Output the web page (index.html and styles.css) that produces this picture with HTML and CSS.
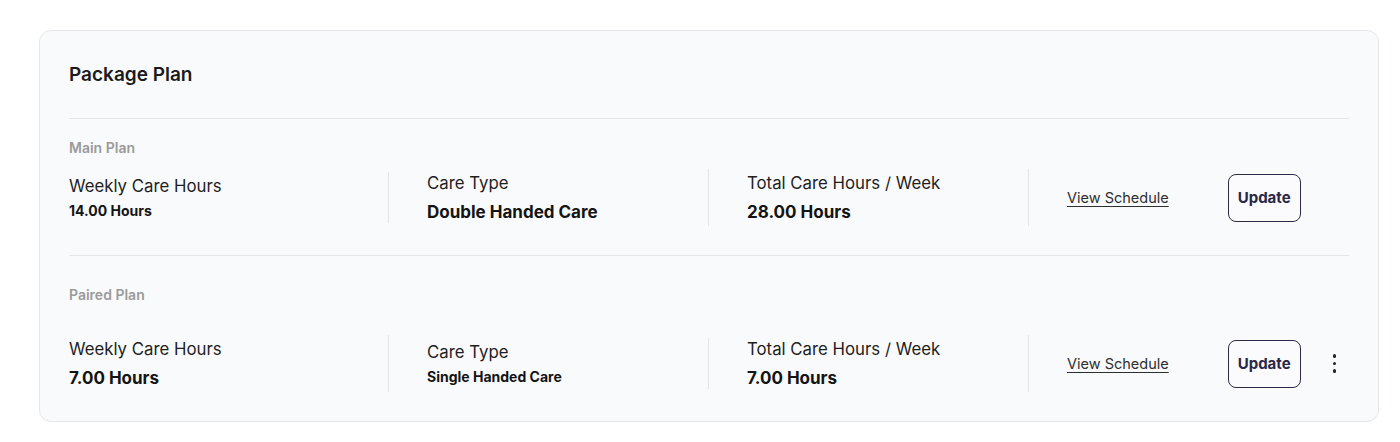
FILE: index.html
```html
<!DOCTYPE html>
<html>
<head>
<meta charset="utf-8">
<link rel="stylesheet" href="styles.css">
</head>
<body>
<div class="page">
  <div class="card">
    <div class="card-header">Package Plan</div>

    <div class="plan plan--main">
      <div class="plan-label">Main Plan</div>
      <div class="plan-row">
        <div class="col">
          <div class="col-label">Weekly Care Hours</div>
          <div class="col-value col-value--small">14.00 Hours</div>
        </div>
        <div class="col">
          <div class="col-label">Care Type</div>
          <div class="col-value">Double Handed Care</div>
        </div>
        <div class="col">
          <div class="col-label">Total Care Hours / Week</div>
          <div class="col-value">28.00 Hours</div>
        </div>
        <div class="col col--actions">
          <a class="link" href="#">View Schedule</a>
          <button class="btn">Update</button>
        </div>
      </div>
    </div>

    <div class="plan plan--paired">
      <div class="plan-label">Paired Plan</div>
      <div class="plan-row">
        <div class="col">
          <div class="col-label">Weekly Care Hours</div>
          <div class="col-value">7.00 Hours</div>
        </div>
        <div class="col">
          <div class="col-label">Care Type</div>
          <div class="col-value col-value--small">Single Handed Care</div>
        </div>
        <div class="col">
          <div class="col-label">Total Care Hours / Week</div>
          <div class="col-value">7.00 Hours</div>
        </div>
        <div class="col col--actions">
          <a class="link" href="#">View Schedule</a>
          <button class="btn">Update</button>
          <span class="kebab"><i></i><i></i><i></i></span>
        </div>
      </div>
    </div>
  </div>
</div>
</body>
</html>
```

FILE: styles.css
```css
* { box-sizing: border-box; }
html, body { margin: 0; padding: 0; background: #ffffff; }
body {
  font-family: Inter, "Noto Sans", sans-serif;
  color: #161616;
}
.page { padding: 30px 22px 0 39px; }
.card {
  width: 1340px;
  height: 392px;
  border: 1px solid #e4e6ea;
  border-radius: 12px;
  background: #f9fafc;
  padding: 0 29px;
}
.card-header {
  font-size: 19px;
  line-height: 24px;
  font-weight: 600;
  padding: 32px 0 31px;
  border-bottom: 1px solid #e4e6ea;
  color: #1b1b1b;
}
.plan { border-bottom: 1px solid #e4e6ea; }
.plan:last-child { border-bottom: none; }
.plan--main { padding: 20px 0 29px; }
.plan--paired { padding: 30px 0 29px; }
.plan-label {
  font-size: 14px;
  line-height: 18px;
  font-weight: 600;
  color: #9a9a9a;
}
.plan--main .plan-label { margin-bottom: 12px; }
.plan--paired .plan-label { margin-bottom: 31px; }
.plan-row {
  display: grid;
  grid-template-columns: 320px 320px 320px 1fr;
  align-items: center;
}
.col {
  padding: 3px 0 3px 38px;
  border-right: 1px solid #e2e4e8;
  display: flex;
  flex-direction: column;
  gap: 7px;
}
.col:first-child { padding-left: 0; }
.col-label {
  font-size: 16.8px;
  line-height: 22px;
  font-weight: 400;
  color: #1e1e1e;
}
.col-value {
  font-size: 17px;
  line-height: 22px;
  font-weight: 700;
  color: #141414;
}
.col-value--small { font-size: 14px; line-height: 18px; margin-top: -2px; }
.col--actions {
  border-right: none;
  flex-direction: row;
  align-items: center;
  gap: 0;
}
.link {
  font-size: 14.5px;
  color: #2e2e2e;
  text-decoration: underline;
  text-underline-offset: 3px;
  margin-right: 59px;
}
.btn {
  width: 73px;
  height: 48px;
  border: 1.5px solid #2c2a48;
  border-radius: 8px;
  background: #fbfbfd;
  font-family: inherit;
  font-size: 15px;
  font-weight: 700;
  color: #2a2846;
  padding: 0;
}
.kebab {
  margin-left: 30px;
  display: flex;
  flex-direction: column;
  gap: 4px;
  padding: 0 2px;
}
.kebab i {
  display: block;
  width: 3.5px;
  height: 3.5px;
  border-radius: 50%;
  background: #222;
}
```
